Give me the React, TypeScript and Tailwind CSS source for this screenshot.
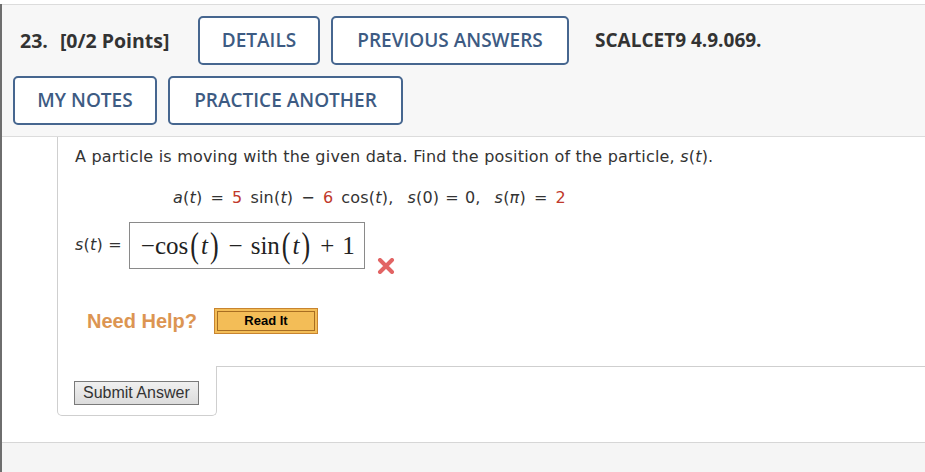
import React from 'react';

const navButton =
  'flex h-[49px] items-center justify-center rounded-[5px] border-2 border-[#46668f] bg-white text-[19px] font-semibold text-[#3d5b83] uppercase';

function WrongMark() {
  return (
    <svg width="18" height="16" viewBox="0 0 18 16" className="mt-[36px] ml-[12px]">
      <path d="M3 2 L15 14 M15 2 L3 14" stroke="#e26464" strokeWidth="4" strokeLinecap="round" />
    </svg>
  );
}

function Red({ children }: { children: React.ReactNode }) {
  return <span className="text-[#c0392b]">{children}</span>;
}

function Op({ children, wide }: { children: React.ReactNode; wide?: boolean }) {
  return <span className={wide ? 'mx-[8px]' : 'mx-[6px]'}>{children}</span>;
}

function Paren({ children }: { children: React.ReactNode }) {
  return <span className="mx-[2px] inline-block scale-y-[1.35] text-[26px] leading-none font-light">{children}</span>;
}

export default function App() {
  return (
    <div className="h-[472px] overflow-hidden bg-white pt-[4px]">
      <div className="flex h-full flex-col border-l-2 border-[#6e6e6e]">
        <header className="border-y border-[#dcdcdc] bg-[#f7f7f7] pt-[11px] pb-[11px] font-['Open_Sans',sans-serif]">
          <div className="flex items-center">
            <p className="ml-[18px] w-[178px] text-[19.5px] font-bold text-[#333]">
              23.
              <span className="ml-[12px]">[0/2 Points]</span>
            </p>
            <button className={`${navButton} w-[122px]`}>Details</button>
            <button className={`${navButton} ml-[11px] w-[238px]`}>Previous Answers</button>
            <p className="ml-[26px] text-[19px] font-bold text-[#333]">SCALCET9 4.9.069.</p>
          </div>
          <div className="mt-[11px] ml-[11px] flex items-center gap-[11px]">
            <button className={`${navButton} w-[144px]`}>My Notes</button>
            <button className={`${navButton} w-[235px]`}>Practice Another</button>
          </div>
        </header>

        <div className="ml-[55px] flex h-[229px] flex-col border-l border-[#cfcfcf] pl-[17px] font-['DejaVu_Sans',sans-serif] text-[16px] text-[#333]">
          <p className="mt-[8px] tracking-[0.2px]">
            A particle is moving with the given data. Find the position of the particle, <i>s</i>(<i>t</i>).
          </p>
          <p className="mt-[17px] ml-[98px] whitespace-pre tracking-[0.2px]">
            <i>a</i>(<i>t</i>)<Op wide>=</Op><Red>5</Red><span className="ml-[8px]">sin(<i>t</i>)</span>
            <Op wide>−</Op><Red>6</Red><span className="ml-[8px]">cos(<i>t</i>),</span>
            <span className="ml-[14px]"><i>s</i>(0)</span><Op>=</Op>0,
            <span className="ml-[14px]"><i>s</i>(<i>π</i>)</span><Op wide>=</Op><Red>2</Red>
          </p>
          <div className="mt-[12px] flex items-start">
            <span className="mt-[11px] tracking-[0.2px]">
              <i>s</i>(<i>t</i>) =
            </span>
            <div className="ml-[7px] flex h-[47px] w-[236px] items-center border border-[#8a8a8a] pl-[11px] font-['Liberation_Serif',serif] text-[25px] text-[#222]">
              −cos<Paren>(</Paren>
              <i>t</i>
              <Paren>)</Paren>
              <span className="mx-[8px]">−</span>
              sin<Paren>(</Paren>
              <i>t</i>
              <Paren>)</Paren>
              <span className="mx-[8px]">+</span>1
            </div>
            <WrongMark />
          </div>
          <div className="mt-[32px] ml-[12px] flex items-center">
            <span className="font-['Liberation_Sans',sans-serif] text-[20px] font-bold text-[#dc9552]">
              Need Help?
            </span>
            <button className="ml-[17px] h-[26px] w-[104px] border border-[#c8842f] bg-[#f3bd57] p-[2px]">
              <span className="flex h-full w-full items-center justify-center border border-[#a86e22] font-['Liberation_Sans',sans-serif] text-[13px] font-bold text-black">
                Read It
              </span>
            </button>
          </div>
        </div>

        <div className="flex h-[50px]">
          <div className="ml-[55px] w-[160px] rounded-b-[5px] border-x border-b border-[#cfcfcf] pt-[14px] pl-[16px]">
            <button className="h-[24px] border border-[#7a7a7a] bg-gradient-to-b from-[#f0f0f0] to-[#dcdcdc] px-[8px] font-['Liberation_Sans',sans-serif] text-[16px] leading-none text-[#333]">
              Submit Answer
            </button>
          </div>
          <div className="flex-1 border-t border-[#cfcfcf]" />
        </div>

        <div className="mt-[26px] flex-1 border-t border-[#d6d6d6] bg-[#f5f5f5]" />
      </div>
    </div>
  );
}
